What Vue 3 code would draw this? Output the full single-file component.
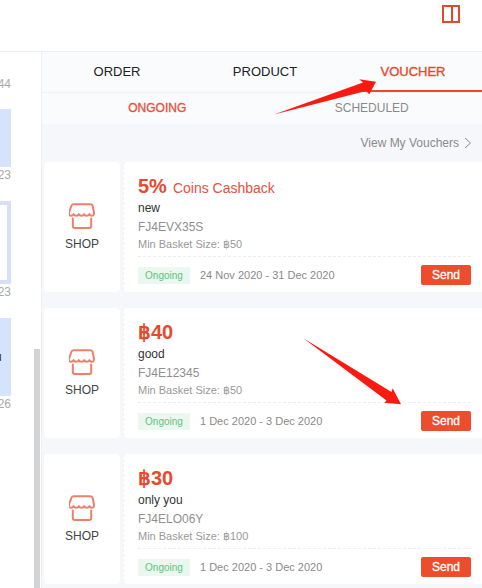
<script setup>
const vouchers = [
  { id: 1, amount: '5%', suffix: 'Coins Cashback', name: 'new', code: 'FJ4EVX35S', min: '฿50', period: '24 Nov 2020 - 31 Dec 2020' },
  { id: 2, amount: '฿40', suffix: '', name: 'good', code: 'FJ4E12345', min: '฿50', period: '1 Dec 2020 - 3 Dec 2020' },
  { id: 3, amount: '฿30', suffix: '', name: 'only you', code: 'FJ4ELO06Y', min: '฿100', period: '1 Dec 2020 - 3 Dec 2020' }
]
</script>

<template>
  <div class="page">
    <header class="topbar">
      <svg class="panel-icon" width="18" height="18" viewBox="0 0 18 18" fill="none" stroke="#e2492c" stroke-width="2">
        <rect x="1" y="1" width="16" height="16" />
        <path d="M10 1v16" />
      </svg>
    </header>

    <div class="body">
      <aside class="chat">
        <span class="time first">44</span>
        <div class="bubble b1"></div>
        <span class="time">23</span>
        <div class="bubble b2"></div>
        <span class="time">23</span>
        <div class="bubble b3"><span class="clip">u</span></div>
        <span class="time">26</span>
        <div class="thumb"></div>
      </aside>

      <main class="panel">
        <nav class="tabs">
          <span class="tab">ORDER</span>
          <span class="tab">PRODUCT</span>
          <span class="tab active">VOUCHER</span>
        </nav>
        <nav class="subtabs">
          <span class="subtab active">ONGOING</span>
          <span class="subtab">SCHEDULED</span>
        </nav>
        <div class="view-link">
          <span>View My Vouchers</span>
          <svg width="8" height="12" viewBox="0 0 8 12" fill="none" stroke="#8a8a8a" stroke-width="1">
            <path d="M1 1l5.500 5L1 11" />
          </svg>
        </div>

        <div class="list">
          <article v-for="v in vouchers" :key="v.id" class="card">
            <div class="shop">
              <svg width="26" height="26" viewBox="0 0 26 26" fill="none" stroke="#ef7f69" stroke-width="2" stroke-linejoin="round" stroke-linecap="round">
                <path d="M4.500 1.200h17c1.300 0 1.900.7 2.200 1.800L25 9.800c.3 1.900-.8 3-2 3-1.300 0-2.200-.9-2.600-1.700-.4.800-1.500 1.700-2.700 1.700s-2.200-.9-2.500-1.700c-.4.800-1.400 1.700-2.700 1.700s-2.300-.9-2.700-1.700c-.3.800-1.300 1.700-2.500 1.700s-2.300-.9-2.700-1.700c-.4.800-1.300 1.700-2.600 1.700-1.200 0-2.300-1.100-2-3L2.300 3c.3-1.100.9-1.800 2.200-1.800z" />
                <path d="M3.800 15.500V23c0 1.200.8 2 2 2h14.400c1.200 0 2-.8 2-2v-7.500" />
              </svg>
              <span class="shop-label">SHOP</span>
            </div>
            <div class="info">
              <div class="title">
                <span class="amount">{{ v.amount }}</span>
                <span v-if="v.suffix" class="suffix">{{ v.suffix }}</span>
              </div>
              <div class="name">{{ v.name }}</div>
              <div class="code">{{ v.code }}</div>
              <div class="min">Min Basket Size: {{ v.min }}</div>
              <div class="foot">
                <span class="tag">Ongoing</span>
                <span class="period">{{ v.period }}</span>
                <button class="send">Send</button>
              </div>
            </div>
          </article>
        </div>
      </main>
    </div>

    <svg class="arrows" width="482" height="588" viewBox="0 0 482 588">
      <polygon fill="#fb1a12" points="274,114.500 363,82.500 359.300,79.300 376,81.700 369.300,94.300 366,91" />
      <polygon fill="#fb1a12" points="303,338 391.500,392 392.700,388.300 401,404.300 384.300,402.700 386.500,400.500" />
    </svg>
  </div>
</template>

<style>
html, body { margin: 0; background: #fff; }
</style>

<style scoped>
.page {
  position: relative;
  width: 482px;
  height: 588px;
  overflow: hidden;
  background: #fff;
  font-family: "Liberation Sans", Arial, sans-serif;
  color: #222;
}
.topbar {
  box-sizing: border-box;
  height: 52px;
  padding: 5px 22px 0 0;
  display: flex;
  justify-content: flex-end;
  align-items: flex-start;
  border-bottom: 1px solid #eceef1;
}
.body { display: flex; height: 536px; }
.chat {
  position: relative;
  box-sizing: border-box;
  flex: none;
  width: 42px;
  padding: 25px 30px 0 0;
  display: flex;
  flex-direction: column;
  align-items: flex-end;
  border-right: 1px solid #eff0f3;
  overflow: hidden;
}
.time {
  display: block;
  font-size: 12px;
  line-height: 14px;
  height: 14px;
  margin: 1px 0 19px;
  color: #a9a9a9;
}
.time.first { margin: 0 0 18px; }
.bubble { box-sizing: border-box; flex: none; width: 24px; background: #d6e3fd; }
.b1 { height: 58px; }
.b2 { height: 83px; background: #fff; border: 4px solid #d6e0f6; }
.b3 { height: 78px; padding: 32px 0 0 0; display: flex; justify-content: flex-start; }
.clip { margin-left: 8px; font-size: 12px; line-height: 14px; color: #333; }
.thumb {
  position: absolute;
  right: 1px;
  top: 297px;
  bottom: 0;
  width: 6px;
  background: #d3d3d3;
}
.panel {
  flex: 1;
  min-width: 0;
  background: #f6f7fb;
  overflow: hidden;
}
.tabs {
  box-sizing: border-box;
  display: flex;
  height: 41px;
  padding-left: 1px;
  background: #fafbfd;
  border-bottom: 1px solid #f0f1f5;
}
.tab {
  flex: none;
  position: relative;
  width: 148px;
  text-align: center;
  font-size: 13px;
  line-height: 40px;
  color: #222;
}
.tab.active { color: #e8492e; -webkit-text-stroke: 0.35px #e8492e; }
.tab.active::after {
  content: "";
  position: absolute;
  left: 22px;
  right: 0;
  bottom: 0;
  height: 2px;
  background: #ea4a2e;
}
.subtabs {
  display: flex;
  height: 31px;
  padding: 0 3px 0 8px;
  background: #fafbfd;
}
.subtab {
  flex: 1;
  text-align: center;
  font-size: 12px;
  line-height: 30px;
  color: #8a8a8a;
}
.subtab.active { color: #e8513c; -webkit-text-stroke: 0.35px #e8513c; }
.view-link {
  display: flex;
  justify-content: flex-end;
  align-items: center;
  gap: 5px;
  height: 38px;
  padding-right: 10px;
  font-size: 12px;
  color: #8a8a8a;
}
.list { display: flex; flex-direction: column; gap: 16px; }
.card { display: flex; height: 130px; width: 460px; }
.shop {
  box-sizing: border-box;
  flex: none;
  width: 76px;
  margin-left: 2px;
  padding-top: 41px;
  display: flex;
  flex-direction: column;
  align-items: center;
  background: #fff;
  border-radius: 4px;
}
.shop-label { margin-top: 8px; font-size: 12px; line-height: 14px; color: #444; }
.info {
  box-sizing: border-box;
  flex: 1;
  margin-left: 3px;
  padding: 13px 31px 0 14px;
  display: flex;
  flex-direction: column;
  background: #fff;
  border-left: 1px dashed #f1f1f4;
  border-radius: 4px 0 0 4px;
}
.title { display: flex; align-items: baseline; gap: 6px; height: 24px; color: #e8492e; }
.amount { font-size: 20px; font-weight: 700; line-height: 22px; }
.suffix { font-size: 14px; color: #e8513c; }
.name { font-size: 12px; line-height: 19px; color: #333; }
.code { font-size: 12px; line-height: 18px; color: #8f8f8f; }
.min { font-size: 11px; line-height: 17px; color: #999; }
.foot {
  display: flex;
  align-items: center;
  margin-top: 3px;
  padding-top: 8px;
  border-top: 1px dashed #eeeeee;
}
.tag {
  box-sizing: border-box;
  width: 52px;
  height: 17px;
  text-align: center;
  font-size: 10px;
  line-height: 17px;
  color: #5cc47c;
  background: #eaf8ef;
}
.period { margin-left: 10px; font-size: 11px; color: #8a8a8a; }
.send {
  margin-left: auto;
  width: 50px;
  height: 20px;
  padding: 0;
  border: none;
  border-radius: 2px;
  background: #ee4d2d;
  color: #fff;
  font-family: inherit;
  font-size: 12px;
  -webkit-text-stroke: 0.3px #fff;
}
.arrows { position: absolute; left: 0; top: 0; pointer-events: none; }
</style>
